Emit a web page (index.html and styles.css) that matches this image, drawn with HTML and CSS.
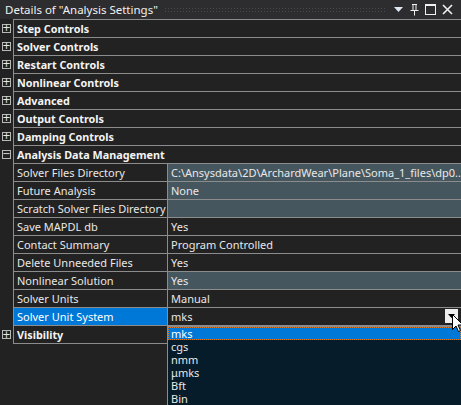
FILE: index.html
```html
<!DOCTYPE html>
<html>
<head>
<meta charset="utf-8">
<link rel="stylesheet" href="styles.css">
</head>
<body>
<div class="panel">
  <div class="titlebar">
    <span class="title">Details of "Analysis Settings"</span>
    <span class="grip"></span>
    <span class="ticons">
      <svg width="10" height="6" viewBox="0 0 10 6"><path d="M0 0H9L4.5 5Z" fill="#dfe9f5"/></svg>
      <svg width="9" height="12" viewBox="0 0 9 12"><path d="M2 0.5H7M3 0.5V6.5M6 0.5V6.5M0.5 6.5H8.5M4.5 6.5V11.5" stroke="#f0f0f0" stroke-width="1" fill="none"/></svg>
      <svg width="11" height="11" viewBox="0 0 11 11"><rect x="0.5" y="0.5" width="10" height="10" fill="none" stroke="#f0f0f0"/><path d="M0 1.5H11" stroke="#f0f0f0"/></svg>
      <svg width="11" height="11" viewBox="0 0 11 11"><path d="M1 1L10 10M10 1L1 10" stroke="#f0f0f0" stroke-width="1.6"/></svg>
    </span>
  </div>
  <div class="grid">
    <div class="row"><span class="gut"><span class="exp">+</span></span><span class="cat">Step Controls</span></div>
    <div class="row"><span class="gut"><span class="exp">+</span></span><span class="cat">Solver Controls</span></div>
    <div class="row"><span class="gut"><span class="exp">+</span></span><span class="cat">Restart Controls</span></div>
    <div class="row"><span class="gut"><span class="exp">+</span></span><span class="cat">Nonlinear Controls</span></div>
    <div class="row"><span class="gut"><span class="exp">+</span></span><span class="cat">Advanced</span></div>
    <div class="row"><span class="gut"><span class="exp">+</span></span><span class="cat">Output Controls</span></div>
    <div class="row"><span class="gut"><span class="exp">+</span></span><span class="cat">Damping Controls</span></div>
    <div class="row"><span class="gut"><span class="exp">−</span></span><span class="cat">Analysis Data Management</span></div>
    <div class="row"><span class="gut"></span><span class="lbl">Solver Files Directory</span><span class="val ro">C:\Ansysdata\2D\ArchardWear\Plane\Soma_1_files\dp0...</span></div>
    <div class="row"><span class="gut"></span><span class="lbl">Future Analysis</span><span class="val ro">None</span></div>
    <div class="row"><span class="gut"></span><span class="lbl">Scratch Solver Files Directory</span><span class="val ro"></span></div>
    <div class="row"><span class="gut"></span><span class="lbl">Save MAPDL db</span><span class="val">Yes</span></div>
    <div class="row"><span class="gut"></span><span class="lbl">Contact Summary</span><span class="val">Program Controlled</span></div>
    <div class="row"><span class="gut"></span><span class="lbl">Delete Unneeded Files</span><span class="val">Yes</span></div>
    <div class="row"><span class="gut"></span><span class="lbl">Nonlinear Solution</span><span class="val ro">Yes</span></div>
    <div class="row"><span class="gut"></span><span class="lbl">Solver Units</span><span class="val">Manual</span></div>
    <div class="row"><span class="gut"></span><span class="lbl sel">Solver Unit System</span><span class="val">mks<span class="ddbtn"><svg width="7" height="4" viewBox="0 0 7 4"><path d="M0 0H7L3.5 4Z" fill="#000"/></svg></span></span></div>
    <div class="row last"><span class="gut"><span class="exp">+</span></span><span class="cat">Visibility</span></div>
  </div>
  <div class="droplist">
    <div class="opt cur">mks</div>
    <div class="opt">cgs</div>
    <div class="opt">nmm</div>
    <div class="opt">μmks</div>
    <div class="opt">Bft</div>
    <div class="opt">Bin</div>
  </div>
  <svg class="cursor" width="12" height="19" viewBox="0 0 12 19"><path d="M0.5 0.5V15.5L4 12L6.5 17.5L8.5 16.5L6 11H11Z" fill="#fff" stroke="#000" stroke-width="1"/></svg>
</div>
</body>
</html>
```
FILE: styles.css
```css
* { box-sizing: border-box; }
html, body { margin: 0; padding: 0; background: #222222; }
body {
  width: 461px; height: 405px; overflow: hidden;
  font-family: "Noto Sans", "Open Sans", sans-serif;
  font-size: 11px; color: #e8e8e8;
}
.panel { position: relative; width: 461px; height: 405px; }
.titlebar {
  height: 19px; background: #2d2d30;
  display: flex; align-items: center;
  padding-left: 5px; padding-right: 8px;
}
.title { color: #f1f1f1; font-size: 11.5px; white-space: nowrap; }
.grip {
  flex: 1; height: 5px; margin: 0 8px 0 6px;
  background-image: radial-gradient(circle, #4a4a4e 0.7px, transparent 0.8px);
  background-size: 3px 3px;
}
.ticons { display: flex; align-items: center; gap: 6px; }
.ticons svg { display: block; }
.grid { display: flex; flex-direction: column; }
.row { display: flex; height: 18px; }
.gut { width: 13px; flex: none; display: flex; align-items: center; justify-content: center; }
.exp {
  width: 9px; height: 9px; border: 1px solid #b8b8b8;
  display: flex; align-items: center; justify-content: center;
  font-size: 10px; line-height: 1; color: #e8e8e8; font-family: "DejaVu Sans", sans-serif;
}
.cat, .lbl, .val {
  border-top: 1px solid #8c8c8c;
  display: flex; align-items: center; white-space: nowrap; overflow: hidden;
}
.cat { flex: 1; border-left: 1px solid #8c8c8c; padding-left: 3px; font-weight: bold; color: #f4f4f4; font-size: 10.8px; }
.lbl { width: 154px; flex: none; border-left: 1px solid #8c8c8c; padding-left: 3px; }
.lbl.sel { background: #0078d7; color: #fff; }
.val { flex: 1; border-left: 1px solid #8c8c8c; padding-left: 3px; position: relative; }
.val.ro { background: #46565f; }
.row.last { height: 19px; }
.row.last .cat { border-bottom: 1px solid #8c8c8c; }
.ddbtn {
  position: absolute; right: 3px; top: 1px; width: 13px; height: 14px;
  background: #eeeeee; display: flex; align-items: center; justify-content: center;
}
.droplist {
  position: absolute; left: 167px; top: 326px; width: 294px; height: 80px;
  background: #061c2a; border-left: 1px solid #8c8c8c; border-top: 1px solid #8c8c8c;
}
.opt { height: 13px; line-height: 13px; padding-left: 3px; color: #e8e8e8; }
.opt.cur { background: #0078d7; color: #fff; outline: 1px dotted #e07a20; outline-offset: -1px; }
.cursor { position: absolute; left: 452px; top: 314px; }
```
